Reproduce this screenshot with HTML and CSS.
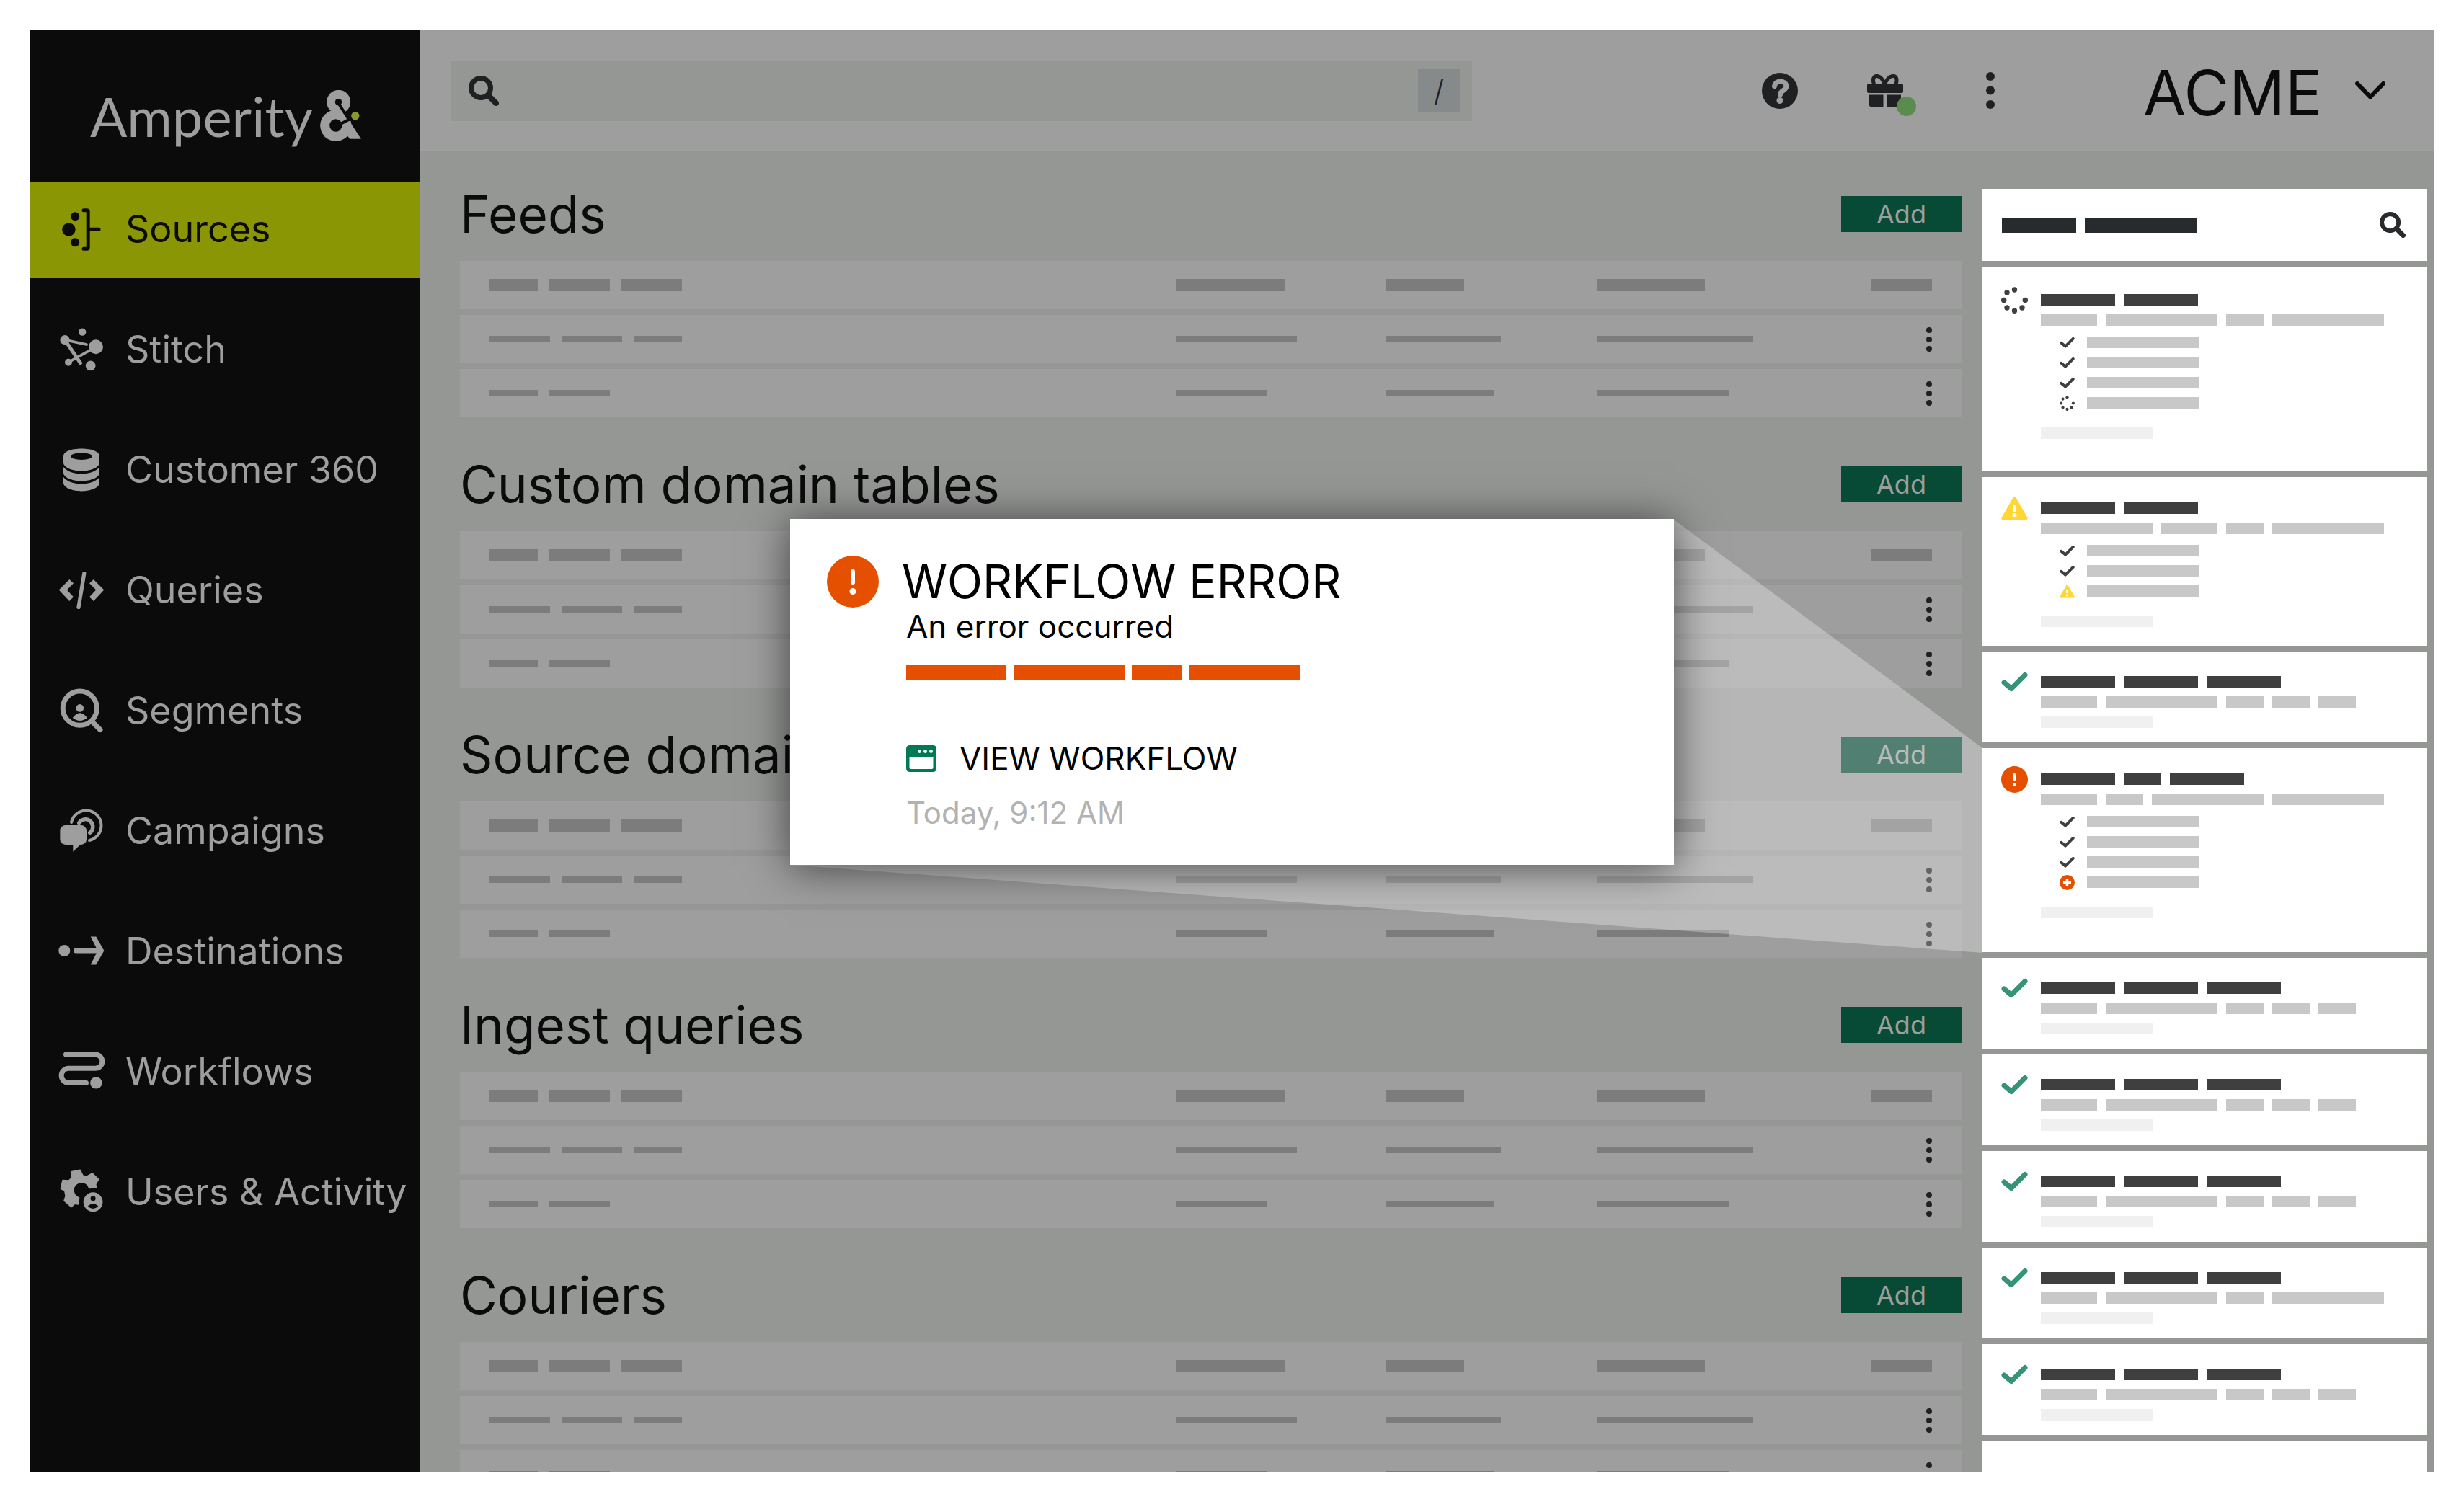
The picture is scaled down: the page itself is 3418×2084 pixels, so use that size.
FILE: index.html
```html
<!DOCTYPE html>
<html lang="en">
<head>
<meta charset="utf-8">
<meta name="viewport" content="width=device-width, initial-scale=1">
<title>Amperity – Sources</title>
<link rel="stylesheet" href="styles.css">
</head>
<body>
<svg class="sprite" aria-hidden="true">
  <symbol id="search" viewBox="0 0 42 42"><circle cx="17" cy="17" r="13.5" fill="none" stroke="currentColor" stroke-width="7"/><path d="M29 29l9 9" stroke="currentColor" stroke-width="8" stroke-linecap="round"/></symbol>
  <symbol id="check" viewBox="0 0 37 37"><path d="M4 19l10 8.500L33 8.500" fill="none" stroke="currentColor" stroke-width="7" stroke-linecap="round" stroke-linejoin="round"/></symbol>
  <symbol id="spinner" viewBox="0 0 37 37"><g fill="currentColor"><circle cx="18.500" cy="4" r="3.700"/><circle cx="8" cy="8" r="3.700"/><circle cx="3.700" cy="18.500" r="3.700"/><circle cx="8" cy="29" r="3.700"/><circle cx="18.500" cy="33.300" r="3.700"/><circle cx="29" cy="29" r="3.700"/><circle cx="33.300" cy="18.500" r="3.700"/></g></symbol>
  <symbol id="warning" viewBox="0 0 37 37"><path d="M18.500 5L34 32H3z" fill="#ffd633" stroke="#ffd633" stroke-width="5" stroke-linejoin="round"/><path d="M18.500 14v9" stroke="#fff" stroke-width="5"/><circle cx="18.500" cy="28" r="3" fill="#fff"/></symbol>
  <symbol id="error" viewBox="0 0 72 72"><circle cx="36" cy="36" r="36" fill="#e55000"/><path d="M36 22v15" stroke="#fff" stroke-width="6" stroke-linecap="round"/><circle cx="36" cy="49.500" r="4.500" fill="#fff"/></symbol>
  <symbol id="plus" viewBox="0 0 21 21"><circle cx="10.500" cy="10.500" r="10.500" fill="#e55000"/><path d="M10.500 5v11M5 10.500h11" stroke="#fff" stroke-width="3.500"/></symbol>
  <symbol id="dots" viewBox="0 0 8 34"><circle cx="4" cy="4" r="4"/><circle cx="4" cy="17" r="4"/><circle cx="4" cy="30" r="4"/></symbol>
</svg>

<div class="app">
  <aside class="sidebar">
    <a class="logo" href="#" aria-label="Amperity home">
      <span>Amperity</span>
      <svg viewBox="42 45 170 213" aria-hidden="true"><circle cx="118.500" cy="94" r="49.500"/><circle cx="107" cy="193" r="65"/><path d="M85 125l40-10 30 46-20 20z"/><path d="M163 173l49 75h-47l-9-12-16-50z"/><g class="cut"><circle cx="118" cy="95" r="14"/><circle cx="107" cy="192" r="26"/><path d="M118 100L162 168M115 192L168 164" /><path class="notch" d="M150 134l22-14 14 52-24 2-10-11z"/></g><circle class="spark" cx="188" cy="152" r="17"/></svg>
    </a>
    <nav aria-label="Main">
      <a class="nav-item active" href="#" aria-current="page"><svg viewBox="0 0 64 64" aria-hidden="true"><circle cx="14.400" cy="32.500" r="9.200"/><circle cx="23.200" cy="14.300" r="6"/><circle cx="23.200" cy="50.300" r="6"/><path class="line" stroke-width="5" d="M35 5.700h4.200q2 0 2 2v49.600q0 2-2 2H35M41.200 32.200H56"/></svg>Sources</a>
      <a class="nav-item" href="#"><svg viewBox="0 0 64 64" aria-hidden="true"><circle cx="9" cy="18.700" r="6.600"/><circle cx="33.200" cy="7.600" r="5.200"/><circle cx="52" cy="28.300" r="10"/><circle cx="14" cy="49.700" r="5"/><circle cx="44.700" cy="54.400" r="6.800"/><path class="line" stroke-width="3.800" stroke-linecap="butt" d="M9 18.700L39 25M14 49.700l38-21.400"/><path class="line" stroke-width="5" d="M9 18.700l21.500 32"/></svg>Stitch</a>
      <a class="nav-item" href="#"><svg viewBox="0 0 64 64" aria-hidden="true"><path fill-rule="evenodd" d="M7 13C7 6 18 2.400 32 2.400S57 6 57 13v9c0 6-11 11.500-25 11.500S7 28 7 22zM17 13.100a15 4.800 0 0 0 30 0 15 4.800 0 0 0-30 0z"/><path d="M7 28c5 6 14 9.500 25 9.500S52 34 57 28v8c0 6-11 11.400-25 11.400S7 42 7 36z"/><path d="M7 42c5 6 14 9.500 25 9.500S52 48 57 42v8c0 6-11 11.400-25 11.400S7 56 7 50z"/></svg>Customer 360</a>
      <a class="nav-item" href="#"><svg viewBox="0 0 64 64" aria-hidden="true"><path d="M.7 31.500L15.200 17l5.800 5.300-9.200 9.200 9.200 9.800-5.800 5.700zM63.300 31.500L48.800 17 43 22.300l9.200 9.200-9.200 9.800 5.800 5.700z"/><path class="line" stroke-width="5.200" d="M35.800 8.500L28 55.500"/></svg>Queries</a>
      <a class="nav-item" href="#"><svg viewBox="0 0 64 64" aria-hidden="true"><circle class="line" cx="29.800" cy="28.700" r="23.600" stroke-width="7"/><path class="line" stroke-width="7" d="M47 47.500l11 11"/><circle cx="29.800" cy="28.400" r="5.300"/><path d="M19.800 42q10-13.500 20.200 0-10.100 8-20.200 0z"/></svg>Segments</a>
      <a class="nav-item" href="#"><svg viewBox="33 36 192 192" aria-hidden="true"><rect x="40" y="108" width="110" height="81" rx="22"/><path d="M94 186v32l33-32z"/><path class="line" stroke-linecap="butt" stroke-width="12" d="M87 96a63 63 0 1 1 75 75"/><path class="line" stroke-linecap="butt" stroke-width="16" d="M119 98a31 31 0 1 1 45 41"/></svg>Campaigns</a>
      <a class="nav-item" href="#"><svg viewBox="0 0 64 64" aria-hidden="true"><circle cx="8.300" cy="31" r="8"/><path class="line" stroke-width="7" d="M24.500 31H57"/><path d="M44.700 11.600h7.600L63.400 31 52.300 50.400h-7.600L54.500 31z"/></svg>Destinations</a>
      <a class="nav-item" href="#"><svg viewBox="0 0 64 64" aria-hidden="true"><path class="line" stroke-width="7" d="M10.500 8.100h40.800a9.400 9.400 0 0 1 0 19.200H14.200a10 10 0 0 0 0 20.100H38.500"/><circle cx="52.300" cy="47.400" r="8.200"/></svg>Workflows</a>
      <a class="nav-item" href="#"><svg viewBox="0 0 64 64" aria-hidden="true"><path stroke="currentColor" stroke-width="1.500" stroke-linejoin="round" d="M17.600 3.800L30 1.200l4 7.800 5 1.500 8-4.700 8.700 8.500-4 6.700 1 4.700-10 .8A11 11 0 1 0 28.500 39.700l-.5 9.300-5.500-.8-4.600 4.600-9.900-8.800 2.200-6.800-1.500-7.100-5.300-2.800L6 15.500l8.500.5 4.500-4.500z"/><path fill-rule="evenodd" d="M34.700 45.700a13.400 13.400 0 0 0 26.800 0 13.400 13.400 0 0 0-26.800 0zm9.900-5a3.500 3.500 0 0 0 7 0 3.500 3.500 0 0 0-7 0zm-3.800 10.800q7.300-7 14.600 0-7.300 7-14.600 0z"/></svg>Users &amp; Activity</a>
    </nav>
  </aside>

  <div class="page">
    <header class="topbar">
      <label class="search"><svg aria-hidden="true"><use href="#search"/></svg><input type="search" aria-label="Search"><kbd>/</kbd></label>
      <div class="tools">
        <button class="help" type="button" aria-label="Help"><svg viewBox="0 0 50 50" aria-hidden="true"><circle cx="25" cy="25" r="25"/><path class="mark" d="M17.500 18.500c.5-4 3.500-6.500 8-6.500 5 0 8.500 2.800 8.500 7 0 5.500-8.500 5.500-8.500 11"/><circle class="mark-dot" cx="25" cy="38.500" r="4.500"/></svg></button>
        <button class="gift" type="button" aria-label="What's new"><svg viewBox="0 0 50 46" aria-hidden="true"><rect y="13" width="50" height="13" rx="2.500"/><path d="M3 28.500h19.500V45H5q-2 0-2-2zM28 28.500h19V43q0 2-2 2H28z"/><path class="bow" d="M24.500 14C20.500 4 16 2 12.500 2.500 7 3.500 8 12 10.500 14M24.500 14C28.500 4 33 2 37 2.500c5.500 1 4.500 9.500 2 11.500"/></svg><span class="badge"></span></button>
        <button class="more" type="button" aria-label="More"><svg viewBox="0 0 12 51" aria-hidden="true"><circle cx="6" cy="6" r="6"/><circle cx="6" cy="25.500" r="6"/><circle cx="6" cy="45" r="6"/></svg></button>
        <label class="tenant"><select aria-label="Tenant"><option>ACME</option></select><svg viewBox="0 0 42 25" aria-hidden="true"><path d="M3 3l18 18.500L39 3"/></svg></label>
      </div>
    </header>

    <div class="body">
      <main class="content">
        <section>
          <div class="section-head"><h2>Feeds</h2><button class="add" type="button">Add</button></div>
          <table>
            <tr class="head"><th><i class="b67"></i><i class="b84"></i><i class="b84"></i></th><th><i class="b150"></i></th><th><i class="b108"></i></th><th><i class="b150"></i></th><th><i class="b84"></i></th></tr>
            <tr><td><i class="b84"></i><i class="b84"></i><i class="b67"></i></td><td><i class="b167"></i></td><td><i class="b159"></i></td><td><i class="b217"></i></td><td><svg><use href="#dots"/></svg></td></tr>
            <tr><td><i class="b67"></i><i class="b84"></i></td><td><i class="b125"></i></td><td><i class="b150"></i></td><td><i class="b184"></i></td><td><svg><use href="#dots"/></svg></td></tr>
          </table>
        </section>
        <section>
          <div class="section-head"><h2>Custom domain tables</h2><button class="add" type="button">Add</button></div>
          <table>
            <tr class="head"><th><i class="b67"></i><i class="b84"></i><i class="b84"></i></th><th><i class="b150"></i></th><th><i class="b108"></i></th><th><i class="b150"></i></th><th><i class="b84"></i></th></tr>
            <tr><td><i class="b84"></i><i class="b84"></i><i class="b67"></i></td><td><i class="b167"></i></td><td><i class="b159"></i></td><td><i class="b217"></i></td><td><svg><use href="#dots"/></svg></td></tr>
            <tr><td><i class="b67"></i><i class="b84"></i></td><td><i class="b125"></i></td><td><i class="b150"></i></td><td><i class="b184"></i></td><td><svg><use href="#dots"/></svg></td></tr>
          </table>
        </section>
        <section>
          <div class="section-head"><h2>Source domain tables</h2><button class="add" type="button">Add</button></div>
          <table>
            <tr class="head"><th><i class="b67"></i><i class="b84"></i><i class="b84"></i></th><th><i class="b150"></i></th><th><i class="b108"></i></th><th><i class="b150"></i></th><th><i class="b84"></i></th></tr>
            <tr><td><i class="b84"></i><i class="b84"></i><i class="b67"></i></td><td><i class="b167"></i></td><td><i class="b159"></i></td><td><i class="b217"></i></td><td><svg><use href="#dots"/></svg></td></tr>
            <tr><td><i class="b67"></i><i class="b84"></i></td><td><i class="b125"></i></td><td><i class="b150"></i></td><td><i class="b184"></i></td><td><svg><use href="#dots"/></svg></td></tr>
          </table>
        </section>
        <section>
          <div class="section-head"><h2>Ingest queries</h2><button class="add" type="button">Add</button></div>
          <table>
            <tr class="head"><th><i class="b67"></i><i class="b84"></i><i class="b84"></i></th><th><i class="b150"></i></th><th><i class="b108"></i></th><th><i class="b150"></i></th><th><i class="b84"></i></th></tr>
            <tr><td><i class="b84"></i><i class="b84"></i><i class="b67"></i></td><td><i class="b167"></i></td><td><i class="b159"></i></td><td><i class="b217"></i></td><td><svg><use href="#dots"/></svg></td></tr>
            <tr><td><i class="b67"></i><i class="b84"></i></td><td><i class="b125"></i></td><td><i class="b150"></i></td><td><i class="b184"></i></td><td><svg><use href="#dots"/></svg></td></tr>
          </table>
        </section>
        <section>
          <div class="section-head"><h2>Couriers</h2><button class="add" type="button">Add</button></div>
          <table>
            <tr class="head"><th><i class="b67"></i><i class="b84"></i><i class="b84"></i></th><th><i class="b150"></i></th><th><i class="b108"></i></th><th><i class="b150"></i></th><th><i class="b84"></i></th></tr>
            <tr><td><i class="b84"></i><i class="b84"></i><i class="b67"></i></td><td><i class="b167"></i></td><td><i class="b159"></i></td><td><i class="b217"></i></td><td><svg><use href="#dots"/></svg></td></tr>
            <tr><td><i class="b67"></i><i class="b84"></i></td><td><i class="b125"></i></td><td><i class="b150"></i></td><td><i class="b184"></i></td><td><svg><use href="#dots"/></svg></td></tr>
          </table>
        </section>
      </main>

      <aside class="activity" aria-label="Workflow notifications">
        <div class="activity-head"><div class="bars"><i class="n103"></i><i class="n155"></i></div><button type="button" aria-label="Search workflows"><svg><use href="#search"/></svg></button></div>

        <article class="card running">
          <div class="status"><svg><use href="#spinner"/></svg></div>
          <div class="bars dark"><i class="n103"></i><i class="n103"></i></div>
          <div class="bars"><i class="n78"></i><i class="n155"></i><i class="n52"></i><i class="n155"></i></div>
          <ul>
            <li><svg><use href="#check"/></svg><i class="n155"></i></li>
            <li><svg><use href="#check"/></svg><i class="n155"></i></li>
            <li><svg><use href="#check"/></svg><i class="n155"></i></li>
            <li><svg><use href="#spinner"/></svg><i class="n155"></i></li>
          </ul>
          <div class="bars faint"><i class="n155"></i></div>
        </article>

        <article class="card warned">
          <div class="status"><svg><use href="#warning"/></svg></div>
          <div class="bars dark"><i class="n103"></i><i class="n103"></i></div>
          <div class="bars"><i class="n155"></i><i class="n78"></i><i class="n52"></i><i class="n155"></i></div>
          <ul>
            <li><svg><use href="#check"/></svg><i class="n155"></i></li>
            <li><svg><use href="#check"/></svg><i class="n155"></i></li>
            <li><svg><use href="#warning"/></svg><i class="n155"></i></li>
          </ul>
          <div class="bars faint"><i class="n155"></i></div>
        </article>

        <article class="card done">
          <div class="status"><svg><use href="#check"/></svg></div>
          <div class="bars dark"><i class="n103"></i><i class="n103"></i><i class="n103"></i></div>
          <div class="bars"><i class="n78"></i><i class="n155"></i><i class="n52"></i><i class="n52"></i><i class="n52"></i></div>
          <div class="bars faint"><i class="n155"></i></div>
        </article>

        <article class="card failed">
          <div class="status"><svg><use href="#error"/></svg></div>
          <div class="bars dark"><i class="n103"></i><i class="n52"></i><i class="n103"></i></div>
          <div class="bars"><i class="n78"></i><i class="n52"></i><i class="n155"></i><i class="n155"></i></div>
          <ul>
            <li><svg><use href="#check"/></svg><i class="n155"></i></li>
            <li><svg><use href="#check"/></svg><i class="n155"></i></li>
            <li><svg><use href="#check"/></svg><i class="n155"></i></li>
            <li><svg><use href="#plus"/></svg><i class="n155"></i></li>
          </ul>
          <div class="bars faint"><i class="n155"></i></div>
        </article>

        <article class="card done">
          <div class="status"><svg><use href="#check"/></svg></div>
          <div class="bars dark"><i class="n103"></i><i class="n103"></i><i class="n103"></i></div>
          <div class="bars"><i class="n78"></i><i class="n155"></i><i class="n52"></i><i class="n52"></i><i class="n52"></i></div>
          <div class="bars faint"><i class="n155"></i></div>
        </article>
        <article class="card done">
          <div class="status"><svg><use href="#check"/></svg></div>
          <div class="bars dark"><i class="n103"></i><i class="n103"></i><i class="n103"></i></div>
          <div class="bars"><i class="n78"></i><i class="n155"></i><i class="n52"></i><i class="n52"></i><i class="n52"></i></div>
          <div class="bars faint"><i class="n155"></i></div>
        </article>
        <article class="card done">
          <div class="status"><svg><use href="#check"/></svg></div>
          <div class="bars dark"><i class="n103"></i><i class="n103"></i><i class="n103"></i></div>
          <div class="bars"><i class="n78"></i><i class="n155"></i><i class="n52"></i><i class="n52"></i><i class="n52"></i></div>
          <div class="bars faint"><i class="n155"></i></div>
        </article>
        <article class="card done">
          <div class="status"><svg><use href="#check"/></svg></div>
          <div class="bars dark"><i class="n103"></i><i class="n103"></i><i class="n103"></i></div>
          <div class="bars"><i class="n78"></i><i class="n155"></i><i class="n52"></i><i class="n155"></i></div>
          <div class="bars faint"><i class="n155"></i></div>
        </article>
        <article class="card done">
          <div class="status"><svg><use href="#check"/></svg></div>
          <div class="bars dark"><i class="n103"></i><i class="n103"></i><i class="n103"></i></div>
          <div class="bars"><i class="n78"></i><i class="n155"></i><i class="n52"></i><i class="n52"></i><i class="n52"></i></div>
          <div class="bars faint"><i class="n155"></i></div>
        </article>
        <article class="card next"></article>
      </aside>
    </div>
  </div>

  <div class="beam"></div>
  <div class="dialog" role="dialog" aria-labelledby="dialog-title">
    <div class="dialog-head"><svg aria-hidden="true"><use href="#error"/></svg><h1 id="dialog-title">WORKFLOW ERROR</h1></div>
    <div class="dialog-body">
      <p>An error occurred</p>
      <div class="bars detail"><i class="d139"></i><i class="d154"></i><i class="d70"></i><i class="d154"></i></div>
      <a href="#"><svg viewBox="0 0 42 37" aria-hidden="true"><path fill-rule="evenodd" d="M5 0h32q5 0 5 5v27q0 5-5 5H5q-5 0-5-5V5q0-5 5-5zM4.500 16v15q0 2 2 2h29q2 0 2-2V16z"/><g fill="#fff"><circle cx="18.500" cy="8.500" r="2.400"/><circle cx="26.500" cy="8.500" r="2.400"/><circle cx="34.500" cy="8.500" r="2.400"/></g></svg>VIEW WORKFLOW</a>
      <time>Today, 9:12 AM</time>
    </div>
  </div>
</div>
</body>
</html>
```
FILE: styles.css
```css
* { box-sizing: border-box; }

body {
  margin: 0;
  padding: 42px;
  background: #fff;
  color: #0b0b0b;
  font-family: Inter, sans-serif;
}

h1, h2, p, ul { margin: 0; padding: 0; font-weight: 400; }
a { color: inherit; text-decoration: none; }
button {
  border: 0;
  padding: 0;
  background: none;
  color: inherit;
  font: inherit;
}
svg { display: block; flex: none; fill: currentColor; }
i { display: block; flex: none; }
.sprite { position: absolute; width: 0; height: 0; }

.app {
  position: relative;
  display: flex;
  height: calc(100vh - 84px);
  overflow: hidden;
  background: #959795;
}

/* Sidebar */
.sidebar {
  flex: none;
  width: 541px;
  background: #0b0b0b;
  color: #9e9e9e;
}
.logo {
  display: flex;
  align-items: center;
  gap: 10px;
  height: 211px;
  padding: 26px 0 0 83px;
  font-family: Lato, sans-serif;
  font-size: 76px;
  line-height: 90px;
}
.logo svg { width: 57px; height: 71px; }
.logo .cut { fill: #0b0b0b; stroke: #0b0b0b; stroke-width: 0; }
.logo .cut path { stroke-width: 12; }
.logo .cut .notch { stroke-width: 0; }
.logo .spark { fill: #8a9a2a; }
nav { display: flex; flex-direction: column; gap: 34px; }
.nav-item {
  display: flex;
  align-items: center;
  gap: 29px;
  height: 133px;
  padding: 0 0 4px 39px;
  font-size: 52px;
  line-height: 60px;
  white-space: nowrap;
}
.nav-item.active { background: #8a9604; color: #0b0b0b; }
.nav-item svg { width: 64px; height: 64px; }
.line { fill: none; stroke: currentColor; stroke-linecap: round; }

/* Top bar */
.page { flex: 1; min-width: 0; }
.topbar {
  display: flex;
  align-items: center;
  justify-content: space-between;
  height: 167px;
  padding: 0 60px 0 42px;
  background: #9e9e9e;
  color: #1e2022;
}
.search {
  display: flex;
  align-items: center;
  width: 53%;
  height: 84px;
  padding: 0 17px 0 25px;
  background: #959795;
}
.topbar .search { max-width: 1417px; }
.search svg { width: 42px; height: 42px; }
.search input {
  flex: 1;
  min-width: 0;
  height: 84px;
  padding: 0 20px;
  border: 0;
  background: none;
  font: inherit;
  font-size: 40px;
}
kbd {
  width: 58px;
  height: 59px;
  background: #868a8b;
  font-family: inherit;
  font-size: 42px;
  font-weight: 300;
  line-height: 59px;
  text-align: center;
}
.tools { display: flex; align-items: center; }
.help svg { width: 50px; height: 50px; }
.mark { fill: none; stroke: #9e9e9e; stroke-width: 7; stroke-linecap: round; }
.mark-dot { fill: #9e9e9e; }
.gift { position: relative; margin-left: 96px; }
.gift svg { width: 50px; height: 46px; }
.bow { fill: none; stroke: currentColor; stroke-width: 5; }
.badge {
  position: absolute;
  right: -18px;
  bottom: -12px;
  width: 27px;
  height: 27px;
  border-radius: 50%;
  background: #5b8b4f;
}
.more { margin-left: 115px; }
.more svg { width: 12px; height: 51px; }
.tenant { position: relative; margin-left: 206px; color: #0b0b0b; }
.tenant select {
  appearance: none;
  border: 0;
  padding: 6px 94px 0 0;
  background: none;
  color: inherit;
  font: inherit;
  font-size: 86px;
  line-height: 100px;
}
.tenant svg {
  position: absolute;
  right: 7px;
  top: 40px;
  width: 42px;
  height: 25px;
  fill: none;
  stroke: currentColor;
  stroke-width: 6;
  stroke-linecap: round;
  stroke-linejoin: round;
  pointer-events: none;
}

/* Source tables */
.body { display: flex; gap: 29px; padding: 0 9px 0 55px; }
.content { flex: 1; min-width: 0; padding-top: 63px; }
.section-head {
  display: flex;
  align-items: center;
  justify-content: space-between;
  height: 50px;
}
h2 { font-size: 71px; line-height: 80px; white-space: nowrap; }
.add {
  width: 167px;
  height: 50px;
  background: #074a35;
  color: #9e9e9e;
  font-size: 36px;
  line-height: 50px;
  text-align: center;
}
table {
  width: 100%;
  margin: 32px 0 60px;
  border-collapse: separate;
  border-spacing: 0 8px;
  table-layout: fixed;
}
tr { background: #9e9e9e; }
th, td { height: 67px; padding: 0; font-size: 0; text-align: left; vertical-align: middle; }
th:first-child { width: 47.7%; }
th:nth-child(2), th:nth-child(3) { width: 14%; }
th:first-child, td:first-child { padding-left: 41px; }
th:last-child, td:last-child { width: 10%; padding-right: 41px; text-align: right; }
table i { display: inline-block; height: 9px; background: #7c7c7c; vertical-align: middle; }
table i + i { margin-left: 16px; }
.head i { height: 17px; }
td svg { display: inline-block; width: 8px; height: 34px; color: #1e2022; vertical-align: middle; }
.b67 { width: 67px; }
.b84 { width: 84px; }
.b108 { width: 108px; }
.b125 { width: 125px; }
.b150 { width: 150px; }
.b159 { width: 159px; }
.b167 { width: 167px; }
.b184 { width: 184px; }
.b217 { width: 217px; }

/* Notification column */
.activity {
  display: flex;
  flex: none;
  flex-direction: column;
  gap: 8px;
  width: 617px;
  padding-top: 53px;
}
.activity-head {
  display: flex;
  align-items: center;
  justify-content: space-between;
  height: 100px;
  padding: 0 30px 0 27px;
  background: #fff;
  color: #272b2e;
}
.activity-head svg { width: 36px; height: 36px; }
.bars { display: flex; gap: 12px; }
.bars i { height: 16px; background: #c8c8c8; }
.activity-head i { height: 21px; background: #272b2e; }
.bars.dark i { background: #3f3f3f; }
.bars.faint i { background: #f0f0f0; }
.card {
  display: grid;
  grid-template-columns: 37px 1fr;
  row-gap: 12px;
  column-gap: 18px;
  padding: 35px 0 20px 26px;
  background: #fff;
  color: #3f3f3f;
}
.card > * { grid-column: 2; }
.card > .status { grid-column: 1; grid-row: 1; display: flex; align-items: center; height: 16px; }
.status svg { width: 37px; height: 37px; }
.card.done { padding-top: 34px; }
.done .status { color: #359378; }
.card ul {
  display: grid;
  gap: 12px;
  margin: 3px 0 14px;
  list-style: none;
}
.card li { display: flex; align-items: center; gap: 17px; height: 16px; padding-left: 26px; }
.card li svg { width: 21px; height: 21px; }
.card li i { height: 16px; background: #c8c8c8; }
.card.running { padding-top: 38px; padding-bottom: 45px; }
.card.warned { padding-bottom: 26px; }
.card.failed { padding-bottom: 47px; }
.next { height: 126px; }
.n52 { width: 52px; }
.n78 { width: 78px; }
.n103 { width: 103px; }
.n155 { width: 155px; }

/* Enlarged notification and the beam that ties it to its card */
.beam {
  position: absolute;
  inset: 0;
  background: rgba(255, 255, 255, .3);
  clip-path: polygon(calc(50% - 613px) 1158px, calc(50% + 613px) 679px, calc(100% - 626px) 996px, calc(100% - 626px) 1280px);
}
.dialog {
  position: absolute;
  top: 678px;
  left: calc(50% - 613px);
  width: 1226px;
  padding: 51px 51px 46px;
  background: #fff;
  box-shadow: 0 4px 56px rgba(0, 0, 0, .6);
  color: #000;
}
.dialog-head { display: flex; align-items: center; gap: 32px; height: 72px; }
.dialog-head svg { width: 72px; height: 72px; }
h1 { font-size: 64px; line-height: 72px; white-space: nowrap; }
.dialog-body { padding-left: 110px; font-size: 44px; line-height: 52px; }
.detail { gap: 10px; margin: 28px 0 82px; }
.detail i { height: 21px; background: #e55000; }
.d70 { width: 70px; }
.d139 { width: 139px; }
.d154 { width: 154px; }
.dialog-body a { display: flex; align-items: center; gap: 32px; }
.dialog-body a svg { width: 42px; height: 37px; color: #007a55; }
time { display: block; margin-top: 24px; color: #b2b2b2; font-size: 42px; }
```
